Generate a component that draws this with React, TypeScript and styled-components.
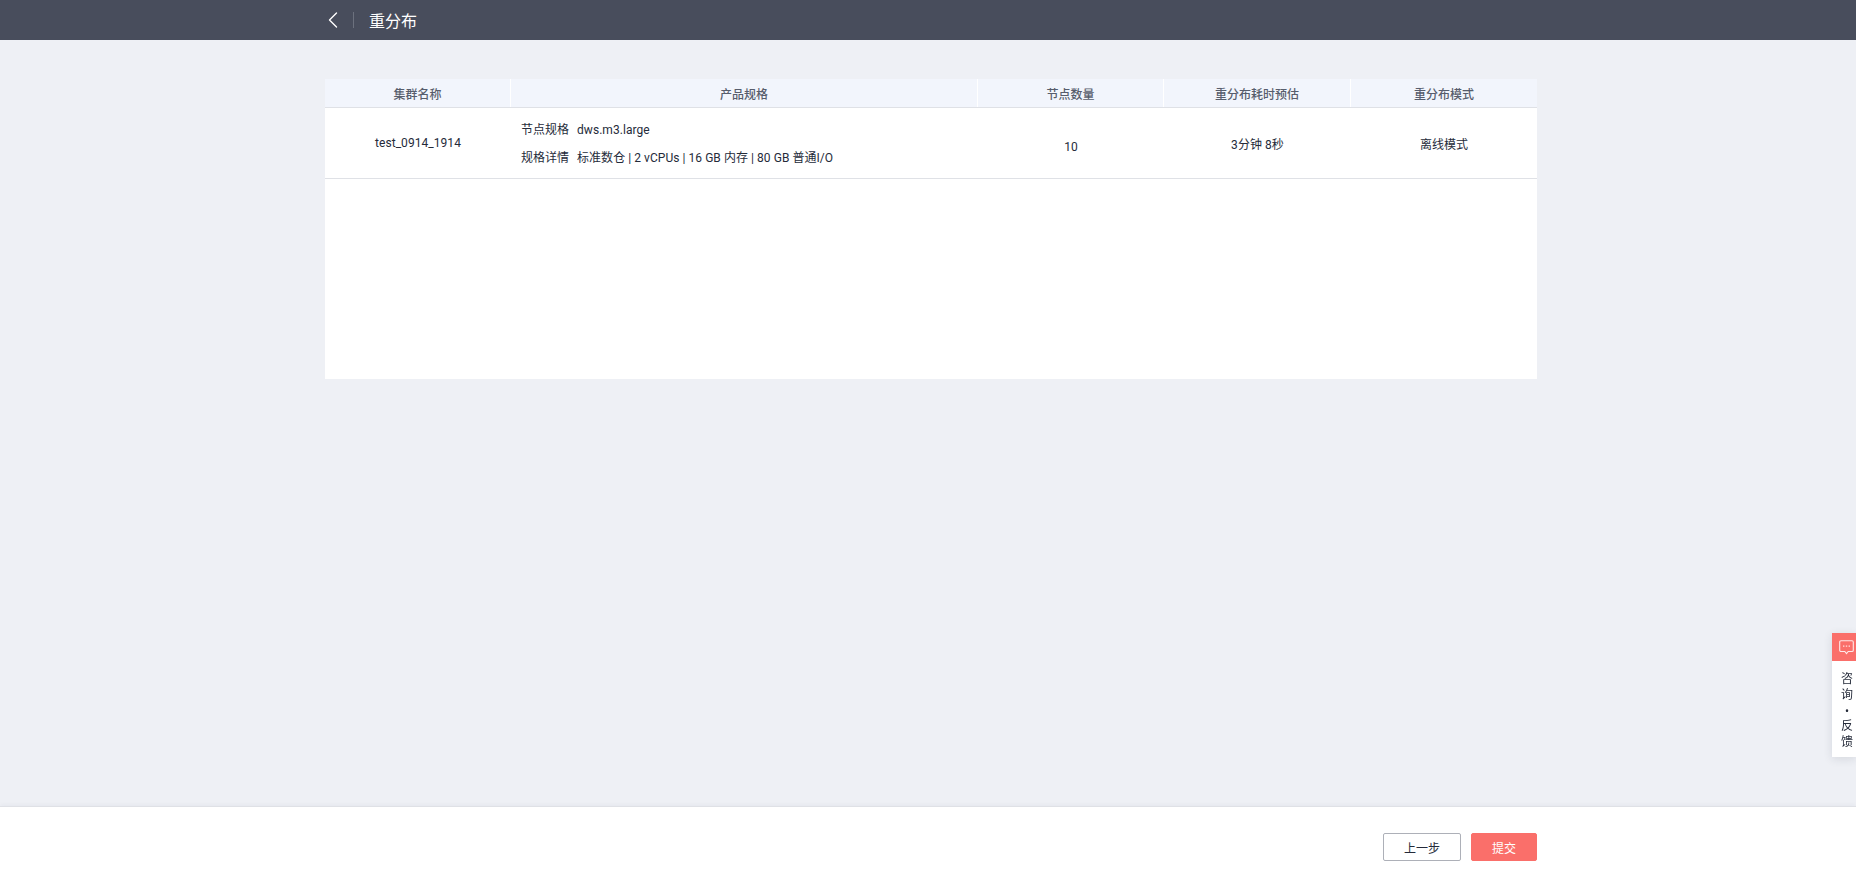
import { ChevronLeft } from "lucide-react";
import styled, { createGlobalStyle } from "styled-components";

const GlobalStyle = createGlobalStyle`
    html, body {
        margin: 0;
        padding: 0;
    }
    body {
        font-family: Roboto, "Noto Sans CJK SC", sans-serif;
        font-size: 12px;
        color: #252b3a;
        background: #eef0f5;
    }
`;

const Page = styled.div`
    height: 100vh;
    display: flex;
    flex-direction: column;
    overflow: hidden;
`;

const TopBar = styled.header`
    height: 40px;
    flex: none;
    background: #484d5c;
    color: #fff;
    display: flex;
    align-items: center;
    padding-left: 319px;
`;

const BackIcon = styled(ChevronLeft)`
    width: 28px;
    height: 28px;
    stroke-width: 1.2;
    color: #fff;
`;

const Divider = styled.span`
    width: 1px;
    height: 16px;
    background: #6c717e;
    margin: 0 15px 0 6px;
`;

const Title = styled.h1`
    margin: 0;
    font-size: 16px;
    font-weight: 400;
`;

const Content = styled.main`
    flex: 1;
    padding: 39px 319px 0 325px;
`;

const Card = styled.section`
    height: 300px;
    background: #fff;
`;

const columns = "186px 467px 186px 187px 1fr";

const HeadRow = styled.div`
    display: grid;
    grid-template-columns: ${columns};
    height: 28px;
    background: #f2f5fc;
    border-bottom: 1px solid #dfe1e6;
`;

const HeadCell = styled.div<{ $last?: boolean }>`
    display: flex;
    align-items: center;
    justify-content: center;
    font-weight: 500;
    color: #575d6c;
    border-right: ${({ $last }) => ($last ? "none" : "1px solid #fff")};
`;

const BodyRow = styled.div`
    display: grid;
    grid-template-columns: ${columns};
    height: 70px;
    border-bottom: 1px solid #dfe1e6;
`;

const Cell = styled.div<{ $offset?: number }>`
    display: flex;
    align-items: center;
    justify-content: center;
    letter-spacing: 0.05px;
    padding-top: ${({ $offset }) => $offset ?? 0}px;
`;

const SpecCell = styled.div`
    display: flex;
    flex-direction: column;
    justify-content: center;
    gap: 11px;
    padding: 2px 0 0 10px;
`;

const SpecLine = styled.div`
    display: flex;
    gap: 8px;
    line-height: 17px;
`;

const SpecValue = styled.span`
    letter-spacing: 0.05px;
`;

const Footer = styled.footer`
    height: 72px;
    flex: none;
    box-sizing: border-box;
    background: #fff;
    border-top: 1px solid #dfe1e6;
    box-shadow: 0 -2px 4px rgba(37, 43, 58, 0.03);
    display: flex;
    justify-content: flex-end;
    align-items: flex-start;
    gap: 10px;
    padding: 26px 319px 0 0;
`;

const Button = styled.button<{ $primary?: boolean }>`
    height: 28px;
    width: ${({ $primary }) => ($primary ? "66px" : "78px")};
    border-radius: 2px;
    border: 1px solid ${({ $primary }) => ($primary ? "#fa6f6a" : "#adb0b8")};
    background: ${({ $primary }) => ($primary ? "#fa6f6a" : "#fff")};
    color: ${({ $primary }) => ($primary ? "#fff" : "#252b3a")};
    font-family: inherit;
    font-size: 12px;
    padding: 0;
`;

const Feedback = styled.aside`
    position: fixed;
    right: 0;
    top: 633px;
    width: 24px;
    height: 124px;
    background: #fff;
    box-shadow: 0 2px 10px rgba(37, 43, 58, 0.12);
    display: flex;
    flex-direction: column;
`;

const FeedbackIcon = styled.div`
    height: 28px;
    flex: none;
    background: #fa6f6a;
    color: #fff;
    display: flex;
    align-items: center;
    padding-left: 7px;
`;

const FeedbackText = styled.div`
    margin: 11px 0 0 9px;
    width: 12px;
    line-height: 15.75px;
    text-align: center;
    color: #252b3a;
`;

function BubbleIcon() {
    return (
        <svg width="15" height="15" viewBox="0 0 15 15" fill="none">
            <path
                d="M2 .7h11A1.3 1.3 0 0 1 14.3 2v8.2a1.3 1.3 0 0 1-1.3 1.3H9.2L7.5 13.6 5.8 11.5H2A1.3 1.3 0 0 1 .7 10.2V2A1.3 1.3 0 0 1 2 .7Z"
                stroke="currentColor"
                strokeOpacity="0.85"
                strokeWidth="1.1"
            />
            <path d="M4 5.5h1.4v1.2H4zM6.8 5.5h1.4v1.2H6.8zM9.6 5.5H11v1.2H9.6z" fill="currentColor" fillOpacity="0.8" />
        </svg>
    );
}

export default function App() {
    return (
        <Page>
            <GlobalStyle />
            <TopBar>
                <BackIcon />
                <Divider />
                <Title>重分布</Title>
            </TopBar>

            <Content>
                <Card>
                    <HeadRow>
                        <HeadCell>集群名称</HeadCell>
                        <HeadCell>产品规格</HeadCell>
                        <HeadCell>节点数量</HeadCell>
                        <HeadCell>重分布耗时预估</HeadCell>
                        <HeadCell $last>重分布模式</HeadCell>
                    </HeadRow>
                    <BodyRow>
                        <Cell>test_0914_1914</Cell>
                        <SpecCell>
                            <SpecLine>
                                <span>节点规格</span>
                                <SpecValue>dws.m3.large</SpecValue>
                            </SpecLine>
                            <SpecLine>
                                <span>规格详情</span>
                                <SpecValue>标准数仓 | 2 vCPUs | 16 GB 内存 | 80 GB 普通I/O</SpecValue>
                            </SpecLine>
                        </SpecCell>
                        <Cell $offset={8}>10</Cell>
                        <Cell>3分钟 8秒</Cell>
                        <Cell>离线模式</Cell>
                    </BodyRow>
                </Card>
            </Content>

            <Footer>
                <Button>上一步</Button>
                <Button $primary>提交</Button>
            </Footer>

            <Feedback>
                <FeedbackIcon>
                    <BubbleIcon />
                </FeedbackIcon>
                <FeedbackText>咨询•反馈</FeedbackText>
            </Feedback>
        </Page>
    );
}
